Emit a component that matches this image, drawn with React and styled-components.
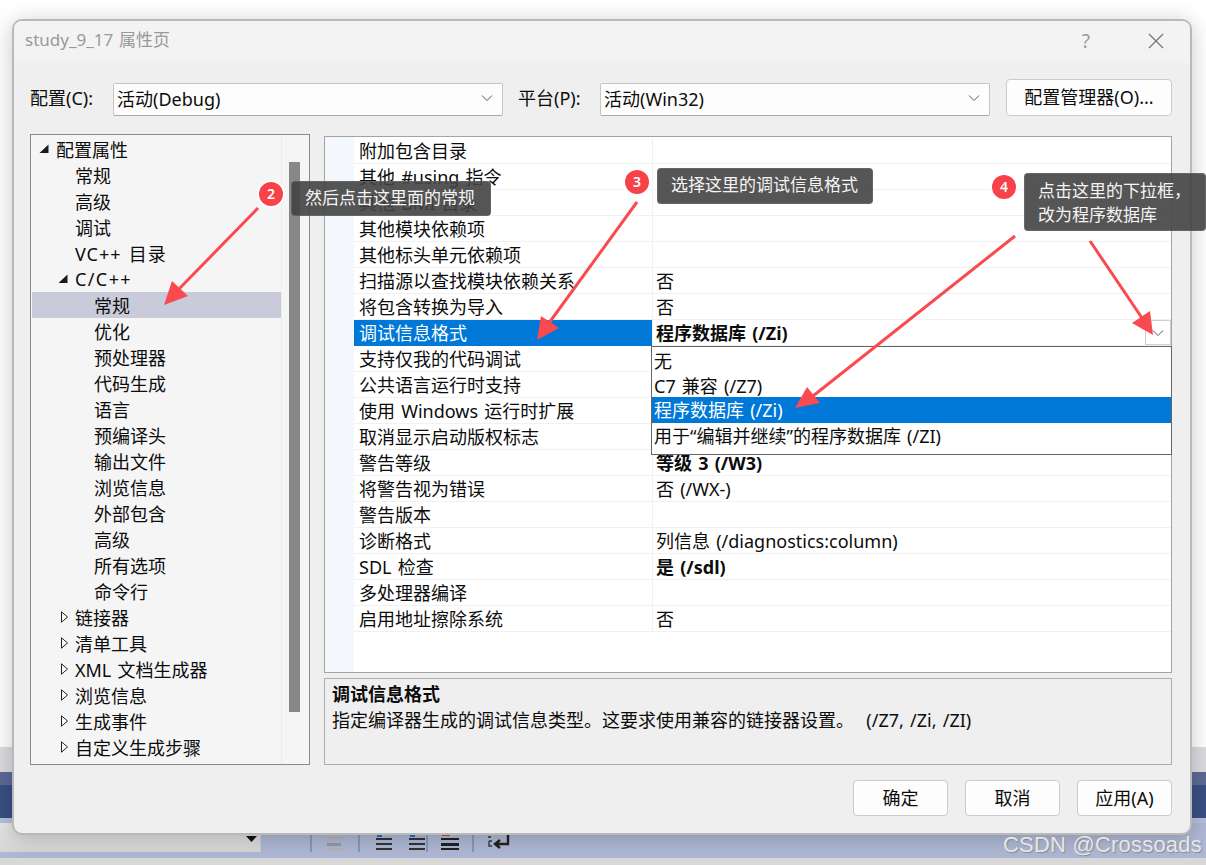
import React from "react";
import styled, { createGlobalStyle } from "styled-components";

const Global = createGlobalStyle`
  html, body { margin: 0; padding: 0; background: #fff; }
  * { box-sizing: border-box; }
  body { font-family: "Noto Sans", "Noto Sans CJK SC", sans-serif; font-size: 18px; color: #0c0c0c; word-spacing: 1.5px; }
`;

const Desktop = styled.div`
  position: relative;
  width: 1206px;
  height: 865px;
  overflow: hidden;
  display: flex;
  flex-direction: column;
`;
const Band = styled.div`
  height: ${p => p.$h}px;
  flex: none;
  background: ${p => p.$bg};
`;
const EditorToolbar = styled.div`
  height: 35px;
  flex: none;
  display: flex;
  align-items: stretch;
  background: #aeb8d4;
`;
const ToolbarInput = styled.div`
  width: 261px;
  height: 29px;
  background: linear-gradient(#e6e6e6, #d6d6d6);
  border-right: 1px solid #c2cce6;
  display: flex;
  justify-content: flex-end;
  align-items: flex-start;
  padding: 13px 3px 0 0;
  margin-right: ${p => p.$mr}px;
`;
const ToolbarSep = styled.div`
  width: 2px;
  height: 29px;
  background: #8a98b8;
`;
const ToolbarIcon = styled.svg`
  width: ${p => p.$w}px;
  height: 29px;
  margin: 0 ${p => p.$m}px;
  flex: none;
`;
const Watermark = styled.div`
  position: absolute;
  left: 1003px;
  top: 832px;
  font-family: "Liberation Sans", sans-serif;
  font-size: 22px;
  letter-spacing: 0.2px;
  word-spacing: 0;
  line-height: 26px;
  color: #e4e6ee;
  text-shadow: 1px 1px 1px #8a8a8a;
  white-space: nowrap;
`;

const Dialog = styled.div`
  position: absolute;
  left: 12px;
  top: 19px;
  width: 1180px;
  height: 816px;
  border: 2px solid #b9b9b9;
  border-radius: 10px;
  background: #efefef;
  box-shadow: 0 3px 22px rgba(0, 0, 0, 0.22);
  overflow: hidden;
  display: flex;
  flex-direction: column;
`;
const TitleBar = styled.div`
  height: 42px;
  flex: none;
  background: #f3f3f3;
  display: flex;
  align-items: center;
  padding: 0 26px 3px 11px;
`;
const TitleText = styled.div`
  flex: 1;
  font-size: 17px;
  line-height: 26px;
  margin-top: -2px;
  color: #999;
`;
const HelpMark = styled.div`
  font-size: 19px;
  color: #9a9a9a;
  margin-right: 58px;
`;
const Content = styled.div`
  flex: 1;
  display: flex;
  flex-direction: column;
  padding: 16px 18px 0 16px;
`;
const ConfigRow = styled.div`
  display: flex;
  align-items: flex-start;
  height: 37px;
  flex: none;
`;
const ConfigLabel = styled.div`
  width: ${p => p.$w}px;
  margin-left: ${p => p.$ml || 0}px;
  height: 32px;
  margin-top: 3px;
  line-height: 32px;
  white-space: nowrap;
`;
const SelectBox = styled.div`
  width: 390px;
  height: 33px;
  margin-top: 4px;
  border: 1px solid #c6c6c6;
  border-bottom-color: #a8a8a8;
  border-radius: 2px;
  background: #fdfdfd;
  display: flex;
  align-items: center;
  justify-content: space-between;
  padding: 0 9px 3px 3px;
`;
const Chevron = styled.svg`
  width: 12px;
  height: 8px;
  flex: none;
`;
const PushButton = styled.button`
  width: ${p => p.$w}px;
  height: ${p => p.$h}px;
  margin-left: ${p => p.$ml}px;
  border: 1px solid #cbcbcb;
  border-radius: 4px;
  background: #fdfdfd;
  font: inherit;
  color: #0c0c0c;
  padding: 0 0 3px;
  white-space: nowrap;
`;
const Panels = styled.div`
  display: grid;
  grid-template-columns: 280px 848px;
  column-gap: 14px;
  height: 631px;
  margin-top: 18px;
  flex: none;
`;
const TreePanel = styled.div`
  border: 1px solid #868a91;
  background: #f5f5f5;
  display: flex;
`;
const TreeList = styled.div`
  flex: 1;
  padding: 1px 0 0 1px;
  min-width: 0;
`;
const TreeRow = styled.div`
  height: 26px;
  display: flex;
  align-items: center;
  padding-left: ${p => 5 + p.$level * 19}px;
  background: ${p => (p.$selected ? "#cacbda" : "transparent")};
  white-space: nowrap;
`;
const TreeLabel = styled.span`
  letter-spacing: ${p => p.$track || 0}px;
`;
const ArrowSlot = styled.div`
  width: 19px;
  flex: none;
  display: flex;
  align-items: center;
  padding-left: 2px;
`;
const TreeTrack = styled.div`
  width: 28px;
  flex: none;
  border-left: 1px solid #ebebeb;
  padding: 27px 0 0 7px;
`;
const TreeThumb = styled.div`
  width: 11px;
  height: 550px;
  background: #888;
`;
const RightColumn = styled.div`
  display: flex;
  flex-direction: column;
  min-width: 0;
`;
const PropGrid = styled.div`
  position: relative;
  flex: 1;
  margin-top: 2px;
  border: 1px solid #a4a4a4;
  background: #fff;
  padding-top: 1px;
  display: flex;
  flex-direction: column;
  background-image: linear-gradient(#f4f8fd, #f4f8fd);
  background-size: 29px 100%;
  background-repeat: no-repeat;
`;
const PropRow = styled.div`
  height: 26px;
  flex: none;
  display: flex;
  padding-left: 29px;
`;
const PropName = styled.div`
  width: 298px;
  flex: none;
  padding-left: 5px;
  line-height: 27px;
  white-space: nowrap;
  border-bottom: 1px solid ${p => (p.$selected ? "#0078d7" : "#f1f1f1")};
  background: ${p => (p.$selected ? "#0078d7" : "transparent")};
  color: ${p => (p.$selected ? "#fff" : "#0c0c0c")};
`;
const PropValue = styled.div`
  flex: 1;
  display: flex;
  justify-content: space-between;
  align-items: flex-start;
  padding-left: 3px;
  line-height: 27px;
  white-space: nowrap;
  border-bottom: 1px solid #f1f1f1;
  border-left: 1px solid #f1f1f1;
  font-weight: ${p => (p.$bold ? 700 : 400)};
`;
const DropButton = styled.div`
  width: 26px;
  height: 25px;
  border: 1px solid #cfcfcf;
  background: #fff;
  display: flex;
  align-items: center;
  justify-content: center;
`;
const DropList = styled.div`
  position: absolute;
  left: 326px;
  top: 209px;
  width: 521px;
  height: 109px;
  border: 1px solid #666;
  background: #fff;
  padding-top: 1px;
`;
const DropOption = styled.div`
  height: ${p => p.$h}px;
  padding-left: 2px;
  line-height: 26px;
  white-space: nowrap;
  background: ${p => (p.$selected ? "#0078d7" : "transparent")};
  color: ${p => (p.$selected ? "#fff" : "#0c0c0c")};
`;
const Description = styled.div`
  height: 87px;
  flex: none;
  margin-top: 5px;
  border: 1px solid #adadad;
  background: #efefef;
  padding: 2px 7px;
`;
const DescTitle = styled.div`
  font-weight: 700;
  line-height: 26px;
`;
const DescText = styled.div`
  line-height: 26px;
  white-space: pre;
`;
const Footer = styled.div`
  display: flex;
  justify-content: flex-end;
  margin-top: 15px;
`;

const Callout = styled.div`
  position: absolute;
  left: ${p => p.$x}px;
  top: ${p => p.$y}px;
  width: ${p => p.$w}px;
  height: ${p => p.$h}px;
  background: rgba(66, 66, 66, 0.9);
  border: 1px solid rgba(120, 120, 120, 0.5);
  border-radius: 4px;
  color: #f4f4f4;
  font-size: 17px;
  line-height: 24px;
  padding: ${p => p.$py}px 0 0 ${p => p.$px}px;
  white-space: pre;
`;
const StepBadge = styled.div`
  position: absolute;
  left: ${p => p.$x - 12}px;
  top: ${p => p.$y - 12}px;
  width: 24px;
  height: 24px;
  border-radius: 50%;
  background: #f7424a;
  box-shadow: 0 0 0 2px #fff;
  color: #fff;
  font-size: 14px;
  font-weight: 600;
  line-height: 23px;
  text-align: center;
`;
const ArrowLayer = styled.svg`
  position: absolute;
  left: 0;
  top: 0;
  width: 1206px;
  height: 865px;
  pointer-events: none;
`;

const ChevronIcon = () => (
  <Chevron viewBox="0 0 12 8">
    <polyline points="1,1.5 6,6.5 11,1.5" fill="none" stroke="#555" strokeWidth="1" />
  </Chevron>
);

const treeItems = [
  { t: "配置属性", l: 0, a: "open" },
  { t: "常规", l: 1 },
  { t: "高级", l: 1 },
  { t: "调试", l: 1 },
  { t: "VC++ 目录", l: 1, tr: 1 },
  { t: "C/C++", l: 1, a: "open", tr: 1.4 },
  { t: "常规", l: 2, s: true },
  { t: "优化", l: 2 },
  { t: "预处理器", l: 2 },
  { t: "代码生成", l: 2 },
  { t: "语言", l: 2 },
  { t: "预编译头", l: 2 },
  { t: "输出文件", l: 2 },
  { t: "浏览信息", l: 2 },
  { t: "外部包含", l: 2 },
  { t: "高级", l: 2 },
  { t: "所有选项", l: 2 },
  { t: "命令行", l: 2 },
  { t: "链接器", l: 1, a: "closed" },
  { t: "清单工具", l: 1, a: "closed" },
  { t: "XML 文档生成器", l: 1, a: "closed" },
  { t: "浏览信息", l: 1, a: "closed" },
  { t: "生成事件", l: 1, a: "closed" },
  { t: "自定义生成步骤", l: 1, a: "closed" },
];

const props = [
  ["附加包含目录", ""],
  ["其他 #using 指令", ""],
  ["其他 BMI 目录", ""],
  ["其他模块依赖项", ""],
  ["其他标头单元依赖项", ""],
  ["扫描源以查找模块依赖关系", "否"],
  ["将包含转换为导入", "否"],
  ["调试信息格式", "程序数据库 (/Zi)", "sel"],
  ["支持仅我的代码调试", ""],
  ["公共语言运行时支持", ""],
  ["使用 Windows 运行时扩展", ""],
  ["取消显示启动版权标志", ""],
  ["警告等级", "等级 3 (/W3)", "bold"],
  ["将警告视为错误", "否 (/WX-)"],
  ["警告版本", ""],
  ["诊断格式", "列信息 (/diagnostics:column)"],
  ["SDL 检查", "是 (/sdl)", "bold"],
  ["多处理器编译", ""],
  ["启用地址擦除系统", "否"],
];

const options = [
  { t: "无", h: 25 },
  { t: "C7 兼容 (/Z7)", h: 24 },
  { t: "程序数据库 (/Zi)", h: 26, s: true },
  { t: "用于“编辑并继续”的程序数据库 (/ZI)", h: 26 },
];

const arrows = [
  { line: "258,208 178,290", head: "164,305 172,281 188,296" },
  { line: "637,202 549,323", head: "537,340 541,316 559,328" },
  { line: "1015,236 813,396", head: "795,408 807,387 820,403" },
  { line: "1090,241 1142,318", head: "1153,335 1132,323 1150,311" },
];

function TreeArrow({ kind }) {
  if (kind === "open")
    return (
      <svg width="10" height="10" viewBox="0 0 10 10">
        <polygon points="9.5,0.5 9.5,9 0.5,9" fill="#1a1a1a" />
      </svg>
    );
  return (
    <svg width="10" height="12" viewBox="0 0 10 12" style={{ marginLeft: 2 }}>
      <polygon points="1.5,0.8 7.5,6 1.5,11.2" fill="#fff" stroke="#222" strokeWidth="1" />
    </svg>
  );
}

const Bars = ({ color = "#333", w = 16 }) => (
  <>
    <rect y="15" width={w} height="2" fill={color} />
    <rect y="20" width={w} height="2" fill={color} />
    <rect y="25" width={w} height="2" fill={color} />
  </>
);

export default function App() {
  return (
    <Desktop>
      <Global />
      <Band $h={747} $bg="#ffffff" />
      <Band $h={25} $bg="#dcdce0" />
      <Band $h={13} $bg="#5c6a96" />
      <Band $h={33} $bg="#3b4f85" />
      <Band $h={5} $bg="#b6bfdb" />
      <EditorToolbar>
        <ToolbarInput $mr={49}>
          <svg width="11" height="6" viewBox="0 0 11 6"><polygon points="0,0 11,0 5.5,6" fill="#111" /></svg>
        </ToolbarInput>
        <ToolbarSep />
        <ToolbarIcon $w={18} $m={14} viewBox="0 0 18 29">
          <rect x="0" y="14" width="18" height="2" fill="#b5b5b5" />
          <rect x="1" y="20" width="14" height="3" fill="#999" />
          <rect x="1" y="25" width="16" height="2" fill="#b5b5b5" />
        </ToolbarIcon>
        <ToolbarSep />
        <ToolbarIcon $w={16} $m={16} viewBox="0 0 16 29">
          <rect x="1" y="12" width="5" height="2" fill="#1e6fc0" />
          <Bars />
        </ToolbarIcon>
        <ToolbarIcon $w={16} $m={1} viewBox="0 0 16 29">
          <rect x="1" y="12" width="5" height="2" fill="#1e6fc0" />
          <Bars />
        </ToolbarIcon>
        <ToolbarSep />
        <ToolbarIcon $w={18} $m={13} viewBox="0 0 18 29">
          <rect x="1" y="12" width="8" height="1" fill="#c05030" />
          <rect y="15" width="18" height="2" fill="#222" />
          <rect y="20" width="18" height="3" fill="#222" />
          <rect y="25" width="18" height="2" fill="#222" />
        </ToolbarIcon>
        <ToolbarSep />
        <ToolbarIcon $w={24} $m={13} viewBox="0 0 24 29">
          <rect x="1" y="13" width="3" height="2" fill="#555" />
          <path d="M2 18 H5 M2 18 V23 H5" fill="none" stroke="#333" strokeWidth="1.3" />
          <path d="M21 12 V21 H9 M13 17 L8 21 L13 25" fill="none" stroke="#222" strokeWidth="2.4" />
        </ToolbarIcon>
      </EditorToolbar>
      <Band $h={7} $bg="#d8d8d8" />

      <Dialog>
        <TitleBar>
          <TitleText>study_9_17 属性页</TitleText>
          <HelpMark>?</HelpMark>
          <svg width="16" height="16" viewBox="0 0 16 16">
            <path d="M1 1 L15 15 M15 1 L1 15" stroke="#777" strokeWidth="1.3" />
          </svg>
        </TitleBar>
        <Content>
          <ConfigRow>
            <ConfigLabel $w={83}>配置(C):</ConfigLabel>
            <SelectBox>活动(Debug)<ChevronIcon /></SelectBox>
            <ConfigLabel $w={82} $ml={15}>平台(P):</ConfigLabel>
            <SelectBox>活动(Win32)<ChevronIcon /></SelectBox>
            <PushButton $w={166} $h={37} $ml={16}>配置管理器(O)...</PushButton>
          </ConfigRow>
          <Panels>
            <TreePanel>
              <TreeList>
                {treeItems.map((it, i) => (
                  <TreeRow key={i} $level={it.l} $selected={it.s}>
                    <ArrowSlot>{it.a && <TreeArrow kind={it.a} />}</ArrowSlot>
                    <TreeLabel $track={it.tr}>{it.t}</TreeLabel>
                  </TreeRow>
                ))}
              </TreeList>
              <TreeTrack><TreeThumb /></TreeTrack>
            </TreePanel>
            <RightColumn>
              <PropGrid>
                {props.map(([n, v, f], i) => (
                  <PropRow key={i}>
                    <PropName $selected={f === "sel"}>{n}</PropName>
                    <PropValue $bold={!!f}>
                      {v}
                      {f === "sel" && <DropButton><ChevronIcon /></DropButton>}
                    </PropValue>
                  </PropRow>
                ))}
                <DropList>
                  {options.map(o => (
                    <DropOption key={o.t} $h={o.h} $selected={o.s}>{o.t}</DropOption>
                  ))}
                </DropList>
              </PropGrid>
              <Description>
                <DescTitle>调试信息格式</DescTitle>
                <DescText>指定编译器生成的调试信息类型。这要求使用兼容的链接器设置。  (/Z7, /Zi, /ZI)</DescText>
              </Description>
            </RightColumn>
          </Panels>
          <Footer>
            <PushButton $w={95} $h={36} $ml={0}>确定</PushButton>
            <PushButton $w={95} $h={36} $ml={17}>取消</PushButton>
            <PushButton $w={95} $h={36} $ml={17}>应用(A)</PushButton>
          </Footer>
        </Content>
      </Dialog>

      <Callout $x={291} $y={181} $w={200} $h={35} $px={13} $py={4}>然后点击这里面的常规</Callout>
      <Callout $x={657} $y={168} $w={216} $h={36} $px={13} $py={4}>选择这里的调试信息格式</Callout>
      <Callout $x={1024} $y={173} $w={182} $h={58} $px={13} $py={5}>{"点击这里的下拉框，\n改为程序数据库"}</Callout>
      <StepBadge $x={271} $y={194}>2</StepBadge>
      <StepBadge $x={637} $y={182}>3</StepBadge>
      <StepBadge $x={1004} $y={187}>4</StepBadge>
      <ArrowLayer viewBox="0 0 1206 865">
        {arrows.map((a, i) => (
          <g key={i}>
            <polyline points={a.line} fill="none" stroke="#f94a50" strokeWidth="3" />
            <polygon points={a.head} fill="#f94a50" />
          </g>
        ))}
      </ArrowLayer>
      <Watermark>CSDN @Crossoads</Watermark>
    </Desktop>
  );
}
